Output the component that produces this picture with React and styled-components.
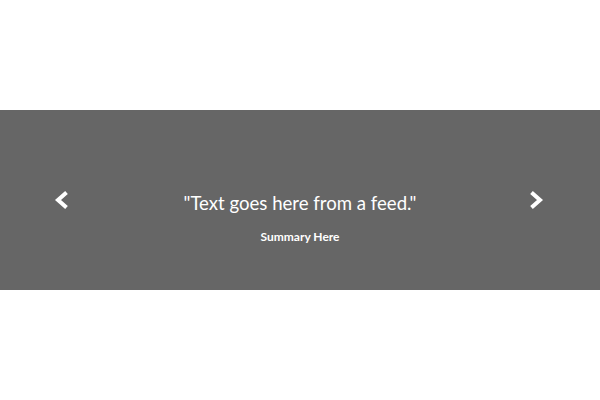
import React from "react";
import styled, { createGlobalStyle } from "styled-components";

const Global = createGlobalStyle`
  html, body { margin: 0; padding: 0; background: #fff; }
  body { font-family: Lato, "Open Sans", sans-serif; }
`;

const Page = styled.div`
  height: 100vh;
  display: flex;
  align-items: center;
`;

const Band = styled.section`
  width: 100%;
  height: 180px;
  background: #666666;
  display: grid;
  grid-template-columns: 1fr auto 1fr;
  align-items: center;
  color: #fff;
`;

const Arrow = styled.button`
  background: none;
  border: 0;
  padding: 0;
  color: #fff;
  display: flex;
  cursor: pointer;
  justify-self: ${(p) => (p.$side === "left" ? "start" : "end")};
  margin: 0 ${(p) => (p.$side === "left" ? "0 0 53px" : "55px 0 0")};
`;

const Slide = styled.div`
  display: flex;
  flex-direction: column;
  align-items: center;
  padding-top: 36px;
`;

const Quote = styled.p`
  margin: 0;
  font-size: 18.6px;
  line-height: 24px;
`;

const Summary = styled.p`
  margin: 14px 0 0;
  font-size: 12px;
  font-weight: 700;
  line-height: 16px;
`;

const Chevron = ({ dir }) => (
  <svg width="16" height="20" viewBox="0 0 16 20">
    <polyline
      points={dir === "left" ? "13.5,2.5 5,10 13.5,17.5" : "2.5,2.5 11,10 2.5,17.5"}
      fill="none"
      stroke="currentColor"
      strokeWidth="4"
    />
  </svg>
);

export default function App() {
  return (
    <Page>
      <Global />
      <Band>
        <Arrow $side="left" aria-label="previous"><Chevron dir="left" /></Arrow>
        <Slide>
          <Quote>"Text goes here from a feed."</Quote>
          <Summary>Summary Here</Summary>
        </Slide>
        <Arrow $side="right" aria-label="next"><Chevron dir="right" /></Arrow>
      </Band>
    </Page>
  );
}
